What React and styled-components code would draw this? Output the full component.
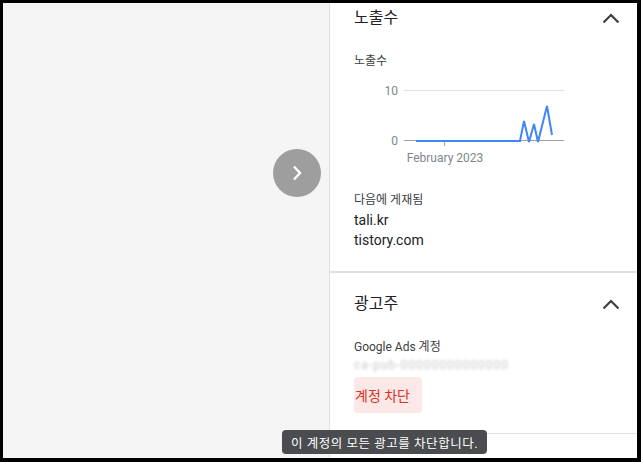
import React from "react";
import styled, { createGlobalStyle } from "styled-components";

const GlobalStyle = createGlobalStyle`
    html, body {
        margin: 0;
        padding: 0;
        background: #000;
    }
    * {
        box-sizing: border-box;
    }
`;

const fontStack = `Roboto, "Noto Sans CJK KR", "Noto Sans", sans-serif`;

const Frame = styled.div`
    position: relative;
    width: 641px;
    height: 462px;
    padding: 3px 4px 4px 3px;
    background: #000;
    font-family: ${fontStack};
`;

const Screen = styled.div`
    display: flex;
    width: 100%;
    height: 100%;
    overflow: hidden;
`;

const LeftPane = styled.div`
    flex: 0 0 327px;
    display: flex;
    justify-content: flex-end;
    align-items: flex-start;
    padding: 146px 8px 0 0;
    background: #f5f5f5;
    border-right: 1px solid #e0e0e0;
`;

const RoundButton = styled.div`
    width: 48px;
    height: 48px;
    border-radius: 50%;
    background: #9e9e9e;
    display: flex;
    align-items: center;
    justify-content: center;
`;

const RightPane = styled.div`
    flex: 1;
    background: #fff;
    display: flex;
    flex-direction: column;
`;

const Section = styled.section`
    padding: ${({ $top }) => $top}px 17px ${({ $bottom }) => $bottom}px 24px;
    border-bottom: ${({ $line }) => $line}px solid #e0e0e0;
`;

const HeaderRow = styled.div`
    display: flex;
    justify-content: space-between;
    align-items: center;
    height: 24px;
`;

const Title = styled.h2`
    margin: 0;
    font-size: 16px;
    line-height: 24px;
    font-weight: 400;
    color: #202124;
`;

const Label = styled.div`
    margin-top: ${({ $gap }) => $gap}px;
    font-size: 12px;
    line-height: 16px;
    color: #3c4043;
`;

const Value = styled.div`
    margin-top: ${({ $gap }) => $gap || 0}px;
    font-size: 14px;
    line-height: 20px;
    color: #202124;
`;

const Chart = styled.svg`
    display: block;
    margin-top: 11px;
    font-family: ${fontStack};
`;

const Redacted = styled.div`
    margin-top: 2px;
    font-size: 12px;
    line-height: 16px;
    color: #c9c9c9;
    letter-spacing: 1px;
    filter: blur(1.4px);
    white-space: nowrap;
`;

const BlockButton = styled.button`
    display: block;
    margin-top: 4px;
    height: 36px;
    padding: 0 12px 0 1px;
    border: none;
    border-radius: 4px;
    background: #fce8e6;
    color: #d93025;
    font-family: ${fontStack};
    font-size: 14px;
    cursor: pointer;
`;

const Tooltip = styled.div`
    position: absolute;
    left: 282px;
    top: 430px;
    width: 205px;
    height: 24px;
    padding: 0 9px;
    display: flex;
    align-items: center;
    border-radius: 4px;
    background: #4a4c4f;
    color: #fff;
    font-size: 12.5px;
    letter-spacing: 0.55px;
    white-space: nowrap;
`;

const ChevronUp = () => (
    <svg width="18" height="11" viewBox="0 0 18 11">
        <polyline points="1.5,9.5 9,2 16.5,9.5" fill="none" stroke="#3c4043" strokeWidth="2.2" />
    </svg>
);

const ChevronRight = () => (
    <svg width="12" height="16" viewBox="0 0 12 16">
        <polyline points="3,1.5 9,8 3,14.5" fill="none" stroke="#fff" strokeWidth="2.4" />
    </svg>
);

const series = "416,141 520,141 524,121 529,142 534,124 538,142 547,106 552,135";

const ImpressionChart = () => (
    <Chart width="230" height="90" viewBox="354 80 230 90">
        <line x1="404" y1="90.5" x2="564" y2="90.5" stroke="#e0e0e0" strokeWidth="1" />
        <line x1="404" y1="140.5" x2="564" y2="140.5" stroke="#9aa0a6" strokeWidth="1" />
        <line x1="444.5" y1="141" x2="444.5" y2="146" stroke="#9aa0a6" strokeWidth="1" />
        <text x="398" y="94.5" fontSize="12" fill="#80868b" textAnchor="end">10</text>
        <text x="398" y="144.5" fontSize="12" fill="#80868b" textAnchor="end">0</text>
        <text x="445" y="161.5" fontSize="12" fill="#80868b" textAnchor="middle">February 2023</text>
        <polyline points={series} fill="none" stroke="#4285f4" strokeWidth="2" strokeLinejoin="miter" />
    </Chart>
);

export default function App() {
    return (
        <>
            <GlobalStyle />
            <Frame>
                <Screen>
                    <LeftPane>
                        <RoundButton>
                            <ChevronRight />
                        </RoundButton>
                    </LeftPane>
                    <RightPane>
                        <Section $top={3} $bottom={21} $line={2}>
                            <HeaderRow>
                                <Title>노출수</Title>
                                <ChevronUp />
                            </HeaderRow>
                            <Label $gap={23}>노출수</Label>
                            <ImpressionChart />
                            <Label $gap={22}>다음에 게재됨</Label>
                            <Value $gap={2}>tali.kr</Value>
                            <Value>tistory.com</Value>
                        </Section>
                        <Section $top={19} $bottom={20} $line={1}>
                            <HeaderRow>
                                <Title>광고주</Title>
                                <ChevronUp />
                            </HeaderRow>
                            <Label $gap={23}>Google Ads 계정</Label>
                            <Redacted>ca-pub-00000000000000</Redacted>
                            <BlockButton>계정 차단</BlockButton>
                        </Section>
                    </RightPane>
                </Screen>
                <Tooltip>이 계정의 모든 광고를 차단합니다.</Tooltip>
            </Frame>
        </>
    );
}
